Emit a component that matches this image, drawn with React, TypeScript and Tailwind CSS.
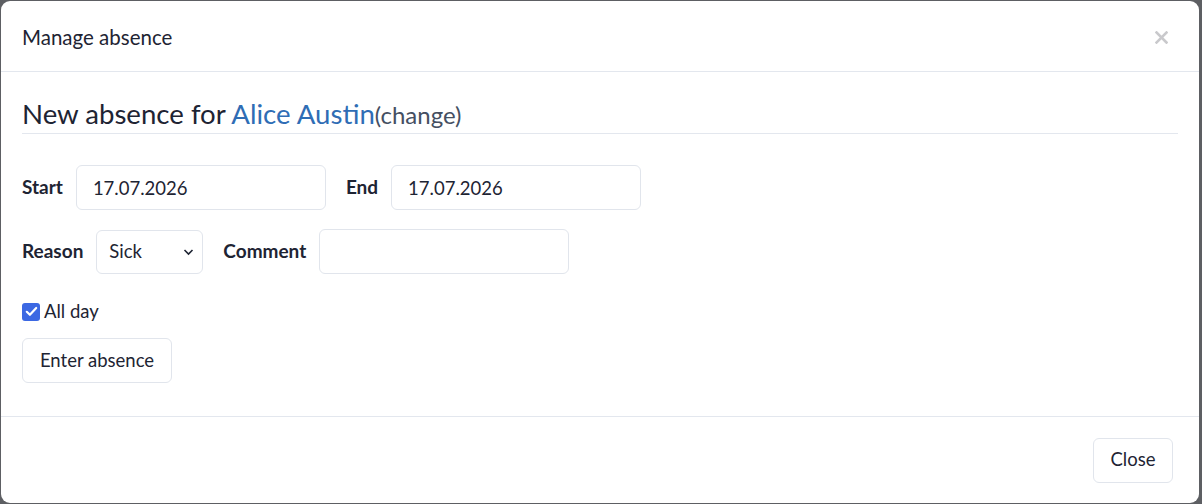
import { useState } from "react";

const font = { fontFamily: "Lato, 'Open Sans', sans-serif" };

const inputCls =
	"h-[45px] w-[250px] rounded-md border border-[#e1e5ec] bg-white px-4 text-[18.5px] text-[#1e2433] outline-none";

const labelCls = "text-[19px] font-bold";

export default function App() {
	const [allDay, setAllDay] = useState(true);

	return (
		<div
			className="min-h-[504px] w-[1202px] bg-[#5d5f63] pl-px pt-px"
			style={font}
		>
			<div className="flex h-[502px] w-[1198px] flex-col rounded-[9px] bg-white text-[#1e2433]">
				{/* header */}
				<div className="flex h-[71px] items-center justify-between border-b border-[#e3e7ee] pl-[21px] pr-[31px] pt-[2px]">
					<h5 className="text-[20.5px] leading-[30px]">Manage absence</h5>
					<button className="text-[#c9c9cc]" title="Close">
						<svg width="13" height="13" viewBox="0 0 13 13">
							<path
								d="M1.5 1.5 L11.5 11.5 M11.5 1.5 L1.5 11.5"
								stroke="currentColor"
								strokeWidth="2.6"
								strokeLinecap="square"
							/>
						</svg>
					</button>
				</div>

				{/* body */}
				<div className="flex flex-1 flex-col px-[21px] pt-[25px]">
					<h3 className="border-b border-[#e3e7ee] pb-[3px] text-[27.6px] leading-[1.2]">
						New absence for{" "}
						<span className="text-[#2f6db5]">Alice Austin</span>
						<span className="text-[24px] text-[#454f62]">(change)</span>
					</h3>

					<div className="mt-[31px] flex items-center">
						<label className={`mr-[13px] ${labelCls}`}>Start</label>
						<input className={inputCls} defaultValue="17.07.2026" />
						<label className={`ml-5 mr-[13px] ${labelCls}`}>End</label>
						<input className={inputCls} defaultValue="17.07.2026" />
					</div>

					<div className="mt-[19px] flex items-center">
						<label className={`mr-[13px] ${labelCls}`}>Reason</label>
						<div className="relative">
							<select className="h-[44px] w-[107px] appearance-none rounded-md border border-[#e1e5ec] bg-white pl-3 text-[18.5px] text-[#1e2433] outline-none">
								<option>Sick</option>
								<option>Vacation</option>
							</select>
							<svg
								className="pointer-events-none absolute right-[9px] top-[18px]"
								width="11"
								height="8"
								viewBox="0 0 11 8"
							>
								<path
									d="M1.5 2 L5.5 6 L9.5 2"
									fill="none"
									stroke="#1e2433"
									strokeWidth="1.6"
								/>
							</svg>
						</div>
						<label className={`ml-5 mr-[13px] ${labelCls}`}>Comment</label>
						<input className={`${inputCls} h-[44px]`} defaultValue="" />
					</div>

					<label
						className="mt-[24px] flex h-[27px] cursor-pointer items-center gap-[4px] text-[18.5px]"
						onClick={() => setAllDay(!allDay)}
					>
						<span
							className={`flex h-[18px] w-[18px] items-center justify-center rounded-[3px] ${
								allDay ? "bg-[#3c68e3]" : "border border-[#aab] bg-white"
							}`}
						>
							{allDay && (
								<svg width="13" height="11" viewBox="0 0 13 11">
									<path
										d="M1.8 5.8 L4.9 8.8 L11.2 2"
										fill="none"
										stroke="white"
										strokeWidth="2.2"
										strokeLinecap="round"
										strokeLinejoin="round"
									/>
								</svg>
							)}
						</span>
						All day
					</label>

					<div className="mt-[13px]">
						<button className="h-[45px] w-[150px] rounded-md border border-[#e1e5ec] bg-white text-[18.5px] text-[#1e2433]">
							Enter absence
						</button>
					</div>
				</div>

				{/* footer */}
				<div className="flex h-[87px] items-center justify-end border-t border-[#e3e7ee] pr-[26px]">
					<button className="h-[45px] w-[80px] rounded-md border border-[#e1e5ec] bg-white text-[18.5px] text-[#1e2433]">
						Close
					</button>
				</div>
			</div>
		</div>
	);
}
